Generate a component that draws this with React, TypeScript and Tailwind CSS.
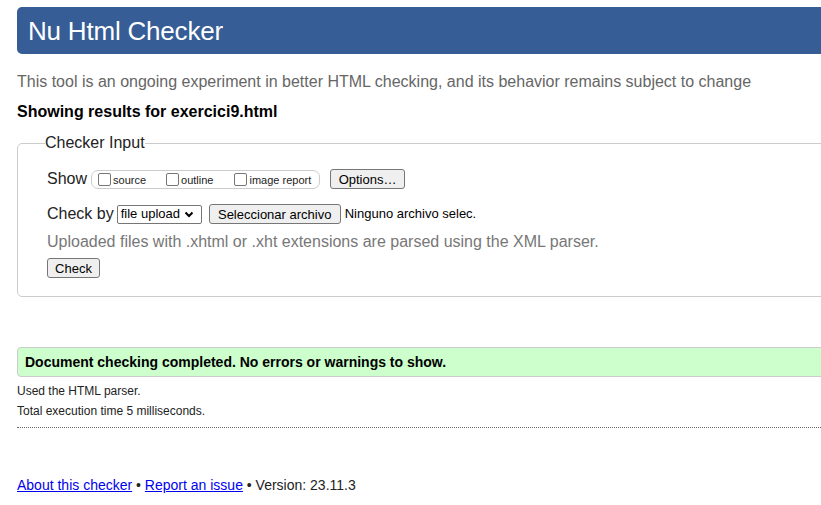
import React from "react";

function Cb({ label, className = "" }: { label: string; className?: string }) {
  return (
    <label className={"flex items-center " + className}>
      <span className="inline-block w-[13px] h-[13px] border border-[#767676] rounded-[2px] bg-white mr-[2px]" />
      <span className="text-[11px] leading-[13px] mt-[3px]">{label}</span>
    </label>
  );
}

export default function App() {
  return (
    <div
      className="w-[821px] h-[505px] overflow-hidden bg-white text-[#222]"
      style={{ fontFamily: '"Liberation Sans", Arial, sans-serif' }}
    >
      <div className="ml-[17px] w-[840px]">
        <header className="mt-[7px] h-[47px] bg-[#365d95] rounded-[5px] flex items-center pl-[11px]">
          <h1 className="text-white text-[26px] leading-none tracking-[-0.2px]">Nu Html Checker</h1>
        </header>
        <p className="mt-[19px] text-[16px] leading-[18px] text-[#666]">
          This tool is an ongoing experiment in better HTML checking, and its behavior remains subject to change
        </p>
        <p className="mt-[12px] text-[16px] leading-[18px] font-bold text-black">
          Showing results for exercici9.html
        </p>
        <fieldset className="mt-[13px] h-[163px] border border-[#cccccc] rounded-[5px] pl-[29px]">
          <legend className="ml-[-2px] px-0 text-[16px] leading-[18px] text-[#222]">Checker Input</legend>
          <div className="mt-[17px] flex items-center h-[20px]">
            <span className="text-[16px] leading-[18px]">Show</span>
            <div className="ml-[4px] h-[19px] w-[229px] border border-[#cccccc] rounded-[7px] flex items-center pl-[6px]">
              <Cb label="source" />
              <Cb label="outline" className="ml-[20px]" />
              <Cb label="image report" className="ml-[21px]" />
            </div>
            <button className="ml-[10px] h-[20px] w-[75px] bg-[#efefef] border border-[#767676] rounded-[3px] text-[13px] leading-none text-black">
              Options…
            </button>
          </div>
          <div className="mt-[15px] flex items-center h-[20px]">
            <span className="text-[16px] leading-[18px]">Check by</span>
            <div className="ml-[3px] h-[19px] w-[85px] border border-[#767676] rounded-[2px] flex items-center pl-[3px] text-[13px] text-black bg-white">
              <span>file upload</span>
              <svg width="10" height="7" viewBox="0 0 10 7" className="ml-[4px]">
                <path d="M1.5 1.5 L5 5 L8.5 1.5" stroke="#000" strokeWidth="2" fill="none" />
              </svg>
            </div>
            <button className="ml-[7px] h-[20px] w-[132px] bg-[#efefef] border border-[#767676] rounded-[3px] text-[13px] leading-none text-black">
              Seleccionar archivo
            </button>
            <span className="ml-[4px] text-[13px] text-black">Ninguno archivo selec.</span>
          </div>
          <p className="mt-[9px] text-[16px] leading-[18px] text-[#777]">
            Uploaded files with .xhtml or .xht extensions are parsed using the XML parser.
          </p>
          <button className="mt-[7px] h-[20px] w-[53px] bg-[#efefef] border border-[#767676] rounded-[3px] text-[13px] leading-none text-black">
            Check
          </button>
        </fieldset>
        <div className="mt-[50px] h-[30px] bg-[#ccffcc] border border-[#cccccc] rounded-[4px] flex items-center pl-[7px]">
          <span className="text-[14px] font-bold text-black">Document checking completed. No errors or warnings to show.</span>
        </div>
        <p className="mt-[7px] text-[12px] leading-[14px]">Used the HTML parser.</p>
        <p className="mt-[6px] text-[12px] leading-[14px]">Total execution time 5 milliseconds.</p>
        <div className="mt-[9px] border-t border-dotted border-[#666]" />
        <p className="mt-[49px] text-[14px] leading-[16px] text-[#222]">
          <a href="#" className="text-[#0000ee] underline">About this checker</a>
          {" • "}
          <a href="#" className="text-[#0000ee] underline">Report an issue</a>
          {" • Version: 23.11.3"}
        </p>
      </div>
    </div>
  );
}
